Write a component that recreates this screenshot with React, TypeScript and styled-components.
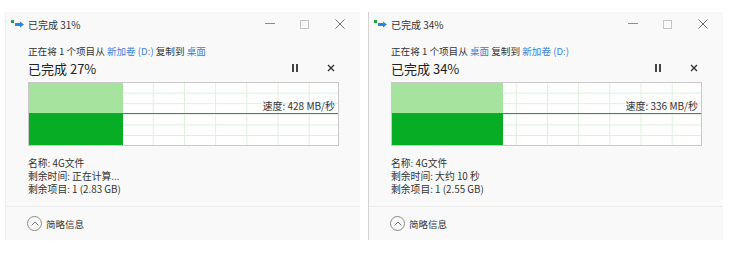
import React from "react";
import styled, {createGlobalStyle} from "styled-components";

const GlobalStyle = createGlobalStyle`
  body {
    margin: 0;
    background: #ffffff;
    font-family: "Noto Sans CJK SC", "Noto Sans", sans-serif;
    color: #333333;
  }
`;

const Page = styled.div`
  display: flex;
  gap: 8px;
  padding: 12px 0 0 5px;
`;

const Dialog = styled.div<{ $edge?: boolean }>`
  width: 355px;
  height: 228px;
  box-sizing: border-box;
  background: #f9f9f9;
  display: flex;
  flex-direction: column;
  border-left: 1px solid ${props => props.$edge ? "#d3d3d3" : "#efefef"};
`;

const TitleBar = styled.div`
  height: 22px;
  display: flex;
  align-items: center;
  padding: 1px 3px 0 5px;
`;

const TitleText = styled.span`
  font-size: 10px;
  color: #333;
  margin-left: 3px;
  flex: 1;
`;

const WinButton = styled.div`
  width: 35px;
  height: 22px;
  display: flex;
  align-items: center;
  justify-content: center;
`;

const Body = styled.div`
  flex: 1;
  padding: 9px 21px 0 22px;
`;

const Desc = styled.div`
  font-size: 9.6px;
  line-height: 14px;
  color: #333;
`;

const LinkText = styled.span`
  color: #3a82d6;
`;

const StatusRow = styled.div`
  display: flex;
  align-items: center;
  height: 20px;
`;

const Status = styled.span`
  font-size: 13px;
  color: #222;
  flex: 1;
`;

const Controls = styled.div`
  display: flex;
  gap: 20px;
`;

const CtrlButton = styled.div`
  width: 16px;
  height: 16px;
  display: flex;
  align-items: center;
  justify-content: center;
`;

const Chart = styled.div`
  position: relative;
  margin-top: 4px;
  height: 64px;
  box-sizing: border-box;
  border: 1px solid #c9c9c9;
  background-color: #ffffff;
  background-image: linear-gradient(to right, #dfeedf 1px, transparent 1px),
  linear-gradient(to bottom, #dfeedf 1px, transparent 1px);
  background-size: 31.2px 10.6px;
  background-position: -1px -1px;
`;

const Fill = styled.div<{ $dark?: boolean }>`
  position: absolute;
  left: 0;
  top: ${props => props.$dark ? "31px" : "0"};
  height: 31px;
  background: ${props => props.$dark ? "#07ad25" : "#a6e39e"};
`;

const MidLine = styled.div`
  position: absolute;
  left: 0;
  right: 0;
  top: 30px;
  height: 1px;
  background: #6a716c;
`;

const Speed = styled.span`
  position: absolute;
  right: 3px;
  top: 17px;
  font-size: 10px;
  line-height: 12px;
  color: #333;
`;

const Details = styled.div`
  margin-top: 11px;
`;

const DetailLine = styled.div`
  height: 13px;
  font-size: 9.8px;
  line-height: 13px;
  color: #333;
`;

const Footer = styled.div`
  height: 33px;
  border-top: 1px solid #ebebeb;
  display: flex;
  align-items: center;
  padding-left: 21px;
  gap: 4px;
  font-size: 9.5px;
  color: #333;
`;

const Chevron = styled.span`
  width: 15px;
  height: 15px;
  box-sizing: border-box;
  border: 1px solid #8a8a8a;
  border-radius: 50%;
  display: flex;
  align-items: center;
  justify-content: center;
`;

interface ICopy {
    title: string;
    from: string;
    to: string;
    done: number;
    speed: string;
    time: string;
    left: string;
}

const copies: ICopy[] = [
    {title: "已完成 31%", from: "新加卷 (D:)", to: "桌面", done: 27, speed: "428 MB/秒", time: "正在计算...", left: "1 (2.83 GB)"},
    {title: "已完成 34%", from: "桌面", to: "新加卷 (D:)", done: 34, speed: "336 MB/秒", time: "大约 10 秒", left: "1 (2.55 GB)"},
];

const fillWidths = [94, 111];

function CopyIcon() {
    return (
        <svg width="14" height="10" viewBox="0 0 14 10">
            <rect x="0" y="1" width="3" height="3" fill="#1aa83a"/>
            <rect x="4" y="4" width="6" height="3" fill="#2f86d8"/>
            <path d="M9 2.5 L13 5.5 L9 8.5 Z" fill="#2f86d8"/>
        </svg>
    );
}

function CopyDialog({copy, index}: { copy: ICopy, index: number }) {
    const w = fillWidths[index];
    return (
        <Dialog $edge={index === 1}>
            <TitleBar>
                <CopyIcon/>
                <TitleText>{copy.title}</TitleText>
                <WinButton>
                    <svg width="10" height="2"><rect width="10" height="1" fill="#8d8d8d"/></svg>
                </WinButton>
                <WinButton>
                    <svg width="9" height="9"><rect x="0.5" y="0.5" width="8" height="8" fill="none" stroke="#c6c6c6"/></svg>
                </WinButton>
                <WinButton>
                    <svg width="10" height="10"><path d="M0.5 0.5 L9.5 9.5 M9.5 0.5 L0.5 9.5" stroke="#6f6f6f" strokeWidth="1"/></svg>
                </WinButton>
            </TitleBar>
            <Body>
                <Desc>
                    正在将 1 个项目从 <LinkText>{copy.from}</LinkText> 复制到 <LinkText>{copy.to}</LinkText>
                </Desc>
                <StatusRow>
                    <Status>已完成 {copy.done}%</Status>
                    <Controls>
                        <CtrlButton>
                            <svg width="6" height="8"><rect x="0" y="0" width="2" height="8" fill="#444"/><rect x="4" y="0" width="2" height="8" fill="#444"/></svg>
                        </CtrlButton>
                        <CtrlButton>
                            <svg width="8" height="8"><path d="M1 1 L7 7 M7 1 L1 7" stroke="#333" strokeWidth="1.4"/></svg>
                        </CtrlButton>
                    </Controls>
                </StatusRow>
                <Chart>
                    <Fill style={{width: w}}/>
                    <Fill $dark style={{width: w}}/>
                    <MidLine/>
                    <Speed>速度: {copy.speed}</Speed>
                </Chart>
                <Details>
                    <DetailLine>名称: 4G文件</DetailLine>
                    <DetailLine>剩余时间: {copy.time}</DetailLine>
                    <DetailLine>剩余项目: {copy.left}</DetailLine>
                </Details>
            </Body>
            <Footer>
                <Chevron>
                    <svg width="8" height="5"><path d="M0.5 4.5 L4 1 L7.5 4.5" fill="none" stroke="#777" strokeWidth="1"/></svg>
                </Chevron>
                简略信息
            </Footer>
        </Dialog>
    );
}

function App() {
    return (
        <>
            <GlobalStyle/>
            <Page>
                {copies.map((copy, i) => (
                    <CopyDialog key={i} copy={copy} index={i}/>
                ))}
            </Page>
        </>
    );
}

export default App;
